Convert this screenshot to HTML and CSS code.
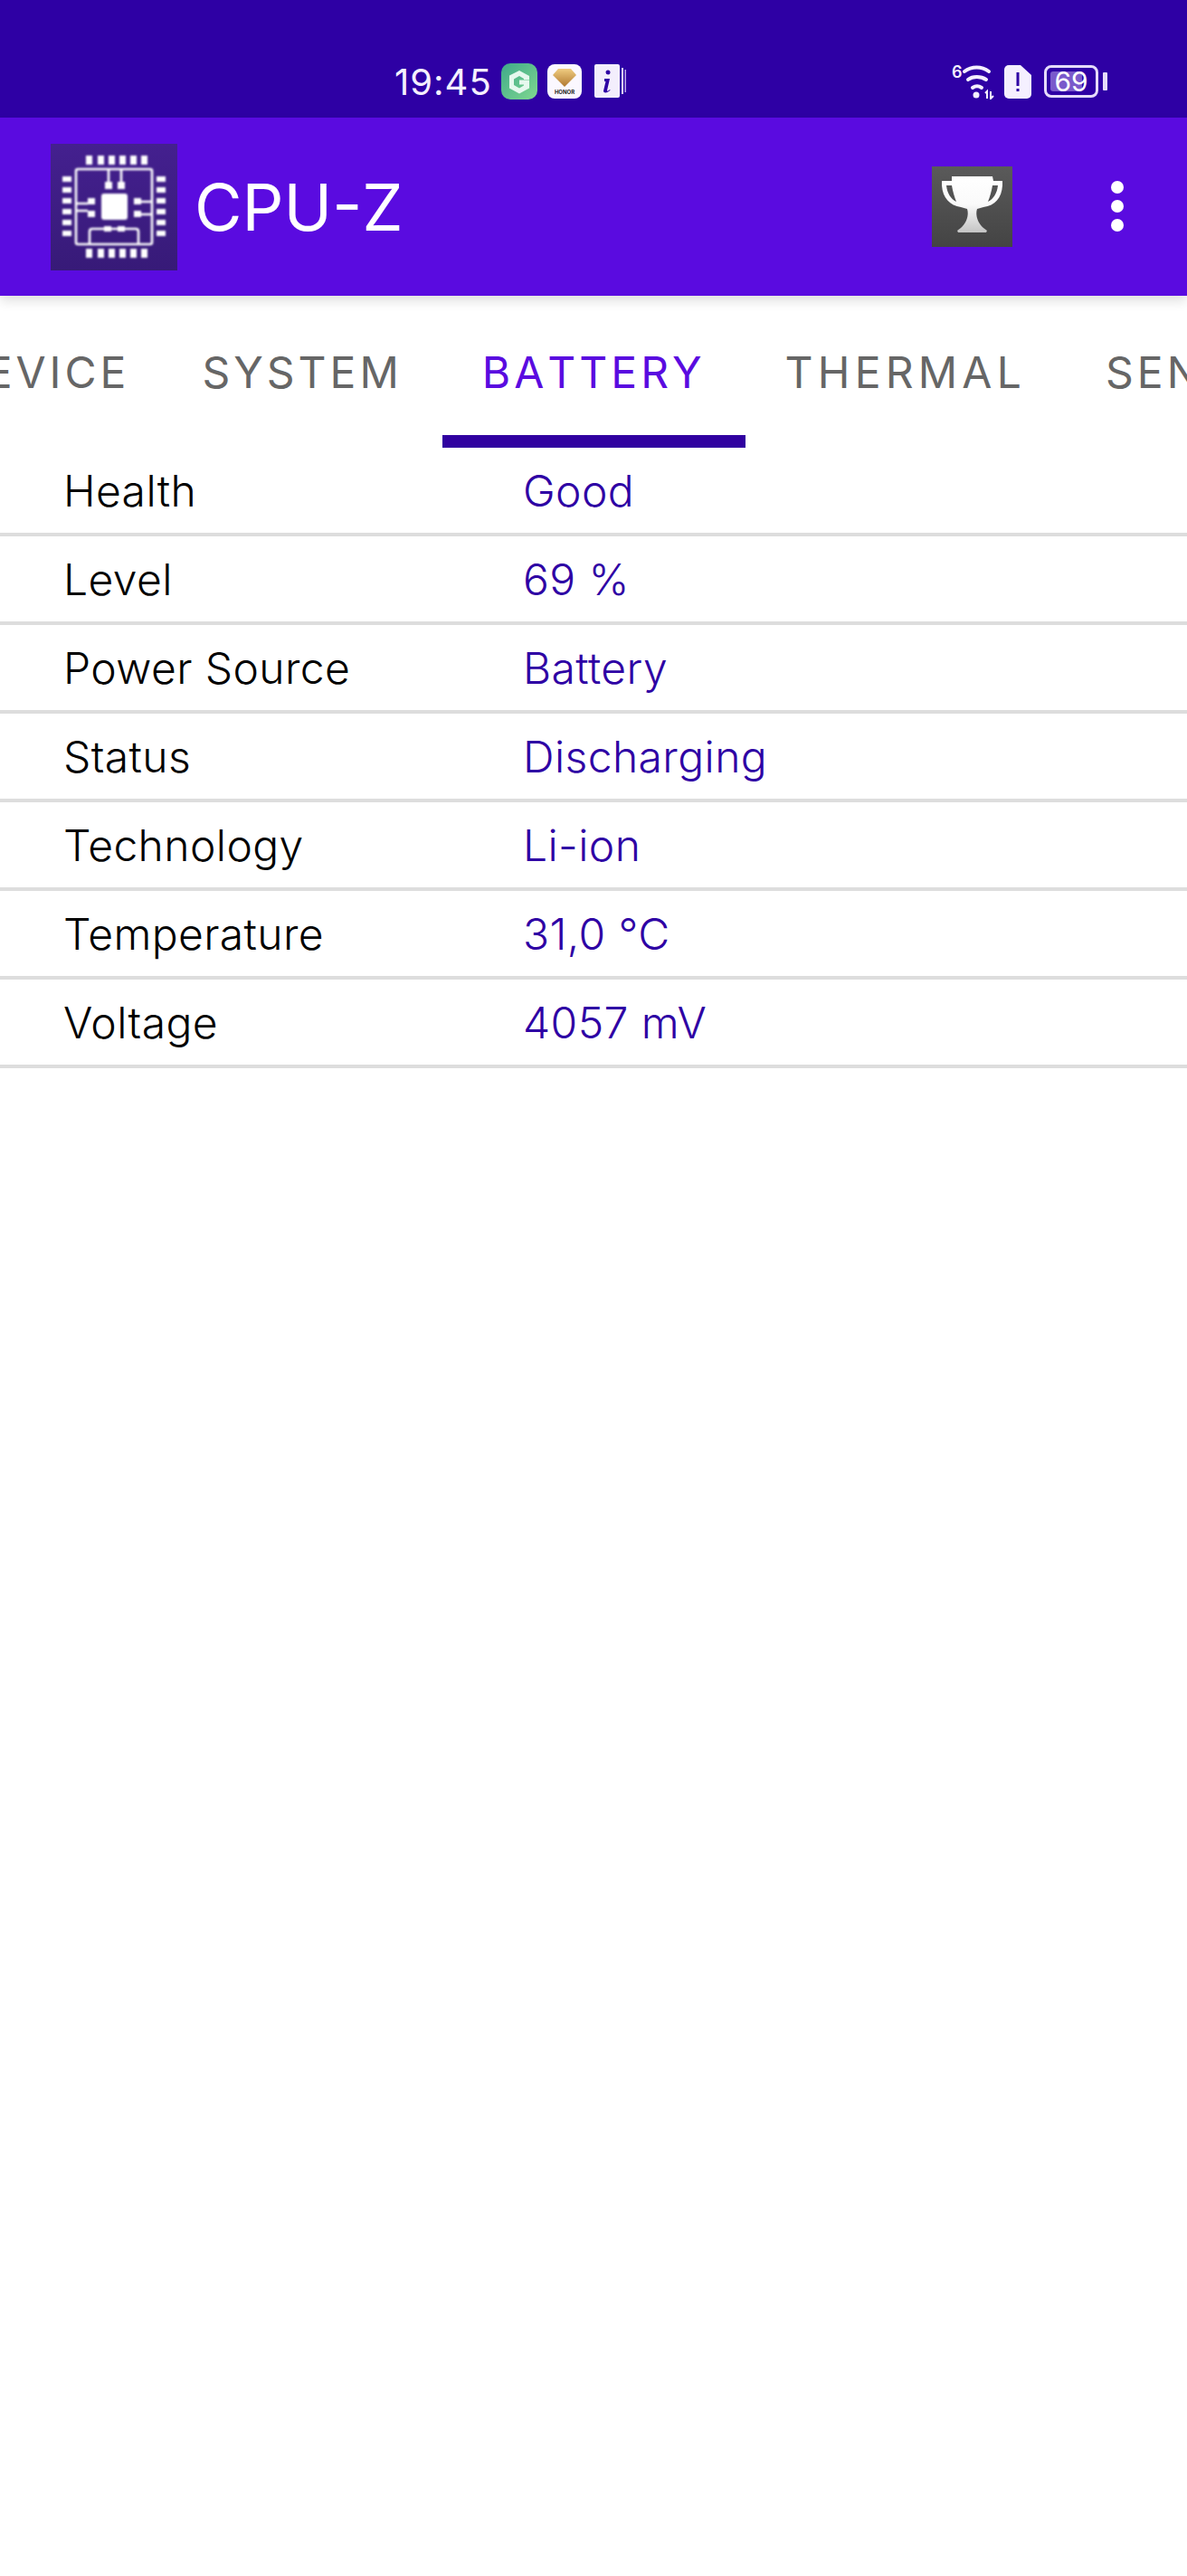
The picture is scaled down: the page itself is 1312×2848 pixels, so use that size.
FILE: index.html
```html
<!DOCTYPE html>
<html lang="en">
<head>
<meta charset="utf-8">
<title>CPU-Z</title>
<link rel="stylesheet" href="styles.css">
</head>
<body>
<div class="status">
  <div class="status-center">
    <span class="time">19:45</span>
    <svg class="ic-g" viewBox="0 0 40 40"><defs><linearGradient id="gg" x1="0" y1="0" x2="1" y2="1"><stop offset="0" stop-color="#3fa98a"/><stop offset="1" stop-color="#80d890"/></linearGradient></defs><rect width="40" height="40" rx="10" fill="url(#gg)"/><path d="M20 8l11 6v4h-6v-1l-5-3-6 3.500v6.500l6 3.500 5-3v-1h-5v-5h11v9l-11 6-11-6v-14z" fill="#e6f8ee"/></svg>
    <svg class="ic-h" viewBox="0 0 38 38"><defs><linearGradient id="hg" x1="0" y1="0" x2="0" y2="1"><stop offset="0" stop-color="#f0cc80"/><stop offset="1" stop-color="#b07830"/></linearGradient></defs><rect width="38" height="38" rx="8" fill="#fbf8ff"/><path d="M12 5h14l6 7-13 13-13-13z" fill="url(#hg)"/><text x="19" y="33" class="honor">HONOR</text></svg>
    <svg class="ic-i" viewBox="0 0 36 38"><rect width="28" height="37" rx="2" fill="#f3eefc"/><rect x="30" y="4" width="2" height="29" fill="#d8cdf2"/><rect x="33.500" y="6" width="1.500" height="25" fill="#b9a7e8"/><path d="M15 6.500a2.500 2.500 0 1 1 0 5 2.500 2.500 0 0 1 0-5zM11 16h6l-3 13c0 1 1 1 3-1l.6.8c-3 3-7.600 3.700-7.600.7l2.500-10.500h-1.500z" fill="#2e00a4"/></svg>
  </div>
  <div class="status-right">
    <svg class="ic-wifi" viewBox="0 0 50 40"><text x="0" y="16" class="six">6</text><g fill="none" stroke="#f5f0ff" stroke-width="4" stroke-linecap="round"><path d="M14 9c8-6 19-6 27 0"/><path d="M18 18c5-4 14-4 20 0"/><path d="M23 27c3-2 7-2 10 0"/></g><circle cx="27" cy="35" r="3.500" fill="#f5f0ff"/><path d="M37 33l2-2v8M43 31v8l3-3" fill="none" stroke="#f5f0ff" stroke-width="2"/></svg>
    <svg class="ic-sim" viewBox="0 0 30 37"><path d="M5 0h13l12 11v21a5 5 0 0 1-5 5H5a5 5 0 0 1-5-5V5a5 5 0 0 1 5-5z" fill="#f5f0ff"/><path d="M13.500 8h3v15h-3zM13.500 26h3v3h-3z" fill="#2e00a4"/></svg>
    <div class="batt"><span class="batt-fill"></span><span class="batt-num">69</span></div>
    <span class="batt-nub"></span>
  </div>
</div>
<header class="bar">
  <div class="logo">
    <svg class="chip" viewBox="0 0 140 140">
      <defs><filter id="soft" x="-10%" y="-10%" width="120%" height="120%"><feGaussianBlur stdDeviation="1.100"/></filter></defs>
      <g filter="url(#soft)">
        <g fill="#fff">
          <path d="M39 13h7v10h-7zM52 13h7v10h-7zM64 13h7v10h-7zM76 13h7v10h-7zM88 13h7v10h-7zM100 13h7v10h-7zM39 116h7v10h-7zM52 116h7v10h-7zM64 116h7v10h-7zM76 116h7v10h-7zM88 116h7v10h-7zM100 116h7v10h-7zM13 36h10v6h-10zM13 48h10v6h-10zM13 60h10v6h-10zM13 72h10v6h-10zM13 84h10v6h-10zM13 96h10v6h-10zM117 36h10v6h-10zM117 48h10v6h-10zM117 60h10v6h-10zM117 72h10v6h-10zM117 84h10v6h-10zM117 96h10v6h-10z"/>
          <rect x="56" y="55" width="29" height="29" rx="3"/>
          <path d="M60 42h8v8h-8zM74 42h8v8h-8zM41 60h8v7h-8zM41 74h8v7h-8zM92 60h8v7h-8zM92 74h8v7h-8zM59 91h8v6h-8zM74 91h8v6h-8z"/>
        </g>
        <g fill="none" stroke="#fff" stroke-width="2.600">
          <rect x="28" y="28" width="84" height="83" rx="2"/>
          <path d="M64 28v14M78 28v14M28 66h13M28 74h13M100 64h12M100 78h12M43 111V97q0-3 3-3h48q3 0 3 3v14"/>
        </g>
      </g>
    </svg>
  </div>
  <h1 class="title">CPU-Z</h1>
  <div class="trophy">
    <svg viewBox="0 0 89 89"><defs><linearGradient id="tg" x1="0" y1="0" x2="0" y2="1"><stop offset="0" stop-color="#fff"/><stop offset="0.500" stop-color="#fafafa"/><stop offset="1" stop-color="#c4c4c4"/></linearGradient></defs>
      <path d="M22 11h45l1 5h10v5c-1 14-8 22-21 24l-7 2c-2 6 0 15 7 21l4 3-1 2H29l-1-2 4-3c7-6 9-15 7-21l-7-2C20 43 12 35 11 21v-5h11zM16 21c1 9 5 15 11 18-2-5-4-12-5-18zM73 21h-6c-1 6-3 13-5 18 6-3 10-9 11-18z" fill="url(#tg)"/></svg>
  </div>
  <div class="more"><span></span><span></span><span></span></div>
</header>
<nav class="tabs">
  <a class="tab tab-first">DEVICE</a>
  <a class="tab">SYSTEM</a>
  <a class="tab active">BATTERY</a>
  <a class="tab tab-thermal">THERMAL</a>
  <a class="tab">SENSORS</a>
</nav>
<main class="rows">
  <div class="row"><span class="k">Health</span><span class="v">Good</span></div>
  <div class="row"><span class="k">Level</span><span class="v">69 %</span></div>
  <div class="row"><span class="k">Power Source</span><span class="v">Battery</span></div>
  <div class="row"><span class="k">Status</span><span class="v">Discharging</span></div>
  <div class="row"><span class="k">Technology</span><span class="v">Li-ion</span></div>
  <div class="row"><span class="k">Temperature</span><span class="v">31,0 °C</span></div>
  <div class="row"><span class="k">Voltage</span><span class="v">4057 mV</span></div>
</main>
</body>
</html>
```
FILE: styles.css
```css
* { box-sizing: border-box; }
html, body { margin: 0; padding: 0; background: #fff; }
body { width: 1312px; height: 2848px; overflow: hidden; font-family: "Inter", "Noto Sans", sans-serif; }

.status { height: 130px; background: #2e00a4; position: relative; display: flex; }
.status-center { display: flex; align-items: center; margin-left: 436px; height: 40px; margin-top: 70px; }
.time { color: #f5f0ff; font-size: 40px; letter-spacing: 1px; width: 118px; white-space: nowrap; font-weight: 400; }
.ic-g { width: 40px; height: 40px; }
.ic-h { width: 38px; height: 38px; margin-left: 11px; }
.honor { font-size: 6px; font-weight: 700; text-anchor: middle; fill: #222; }
.ic-i { width: 36px; height: 38px; margin-left: 14px; }
.status-right { display: flex; align-items: center; margin-left: 359px; margin-top: 71px; height: 38px; }
.ic-wifi { width: 50px; height: 40px; }
.six { font-size: 18px; fill: #f5f0ff; font-weight: 600; }
.ic-sim { width: 30px; height: 37px; margin-left: 8px; }
.batt { width: 60px; height: 36px; border: 3px solid #e6dcfb; border-radius: 8px; margin-left: 14px; position: relative; display: flex; align-items: center; justify-content: center; }
.batt-fill { position: absolute; left: 4px; top: 4px; bottom: 4px; width: 35px; background: #7a5acb; border-radius: 3px; }
.batt-num { position: relative; color: #fff; font-size: 30px; line-height: 1; }
.batt-nub { width: 5px; height: 20px; background: #e6dcfb; border-radius: 1px; margin-left: 5px; }

.bar { height: 197px; background: #5a0be0; display: flex; align-items: center; padding-left: 56px; position: relative; box-shadow: 0 6px 12px rgba(0,0,0,.12); }
.logo { width: 140px; height: 140px; background: linear-gradient(#44208f, #371a78); flex: none; }
.chip { display: block; width: 140px; height: 140px; }
.title { margin: 0 0 0 19px; font-weight: 400; font-size: 72px; color: #fff; width: 815px; }
.trophy { width: 89px; height: 89px; background: linear-gradient(#5a5a5a, #444); margin-top: -1px; flex: none; }
.trophy svg { display: block; width: 89px; height: 89px; }
.more { display: flex; flex-direction: column; gap: 7px; margin-left: 109px; margin-top: -1px; }
.more span { width: 14px; height: 14px; border-radius: 50%; background: #fff; }

.tabs { height: 168px; display: flex; overflow: hidden; }
.tab { padding: 0 44px; height: 168px; line-height: 170px; flex: none; font-size: 48px; font-weight: 400; letter-spacing: 4px; font-kerning: none; color: #666; text-align: center; }
.tab-first { margin-left: -98px; margin-right: -8px; }
.tab-thermal { letter-spacing: 5.200px; }
.tab.active { color: #5a0be0; border-bottom: 14px solid #3000a0; }

.row { height: 98px; border-bottom: 4px solid #ddd; display: flex; align-items: center; font-size: 48px; font-weight: 350; letter-spacing: .4px; padding-left: 70px; }
.k { width: 508px; color: #000; }
.v { color: #2e00a4; }
```
